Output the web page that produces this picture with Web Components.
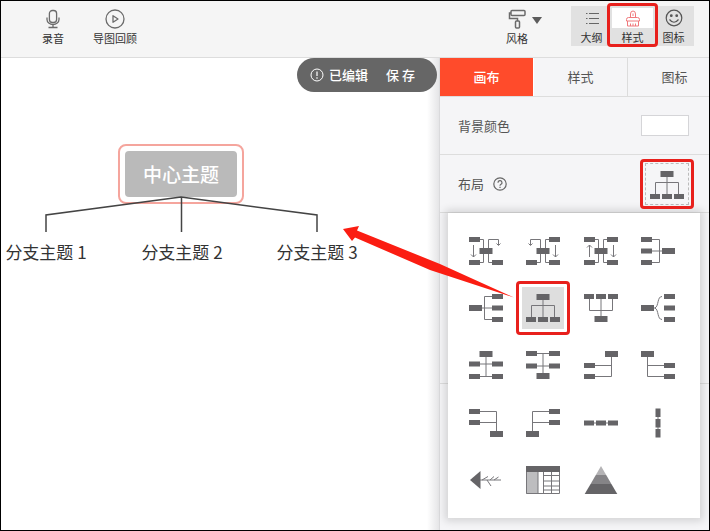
<!DOCTYPE html>
<html lang="zh-CN">
<head>
<meta charset="utf-8">
<title>思维导图</title>
<style>
body { margin: 0; font-family: "Noto Sans CJK SC", "Noto Sans", sans-serif; color: #444; }
</style>
</head>
<body>
<mind-app></mind-app>

<script>
const RESET = `
  * { box-sizing: border-box; }
  button { font: inherit; color: inherit; background: none; border: 0; padding: 0; margin: 0; cursor: pointer; }
  svg { display: block; }
`;

function define(name, html) {
  customElements.define(name, class extends HTMLElement {
    constructor() {
      super();
      this.attachShadow({ mode: 'open' });
    }
    connectedCallback() {
      this.shadowRoot.innerHTML = `<style>${RESET}</style>` + (typeof html === 'function' ? html(this) : html);
    }
  });
}

/* Layout glyphs, drawn around the origin in a 42 x 42 box */
const leaf = (x, y) => `<rect x="${x}" y="${y}" width="11" height="5"/>`;
const core = (x, y) => `<rect x="${x}" y="${y}" width="13" height="6"/>`;
const line = d => `<path d="${d}" fill="none" stroke="#77767a" stroke-width="1"/>`;
const flip = g => `<g transform="scale(-1 1)">${g}</g>`;
const down = x => line(`M${x} -6V6M${x - 2.5} 3.5L${x} 6L${x + 2.5} 3.5`);
const up = x => line(`M${x} 6V-6M${x - 2.5} -3.5L${x} -6L${x + 2.5} -3.5`);
const row3 = y => [-17, -5, 7].map(x => `<rect x="${x}" y="${y}" width="10" height="5"/>`).join('');
const clockwise = line('M-6 -11.5H-2.5V11.5H-6M6 11.5H2.5V-11.5H12.5V-6M10.5 -7.5L12.5 -5.5L14.5 -7.5')
  + down(-12.5) + leaf(-17, -14) + leaf(-17, 9) + leaf(6, 9) + core(-6.5, -3);
const rightTree = line('M-6 0H6M6 -11.5H-1.5V11.5H6') + core(-17, -3) + leaf(6, -14) + leaf(6, -2.5) + leaf(6, 9);
const dropLeft = line('M10.5 -10V11.5H-6M10.5 .5H-6') + core(4, -14) + leaf(-17, -2) + leaf(-17, 9);
const riseLeft = line('M10.5 10V-11.5H-6M10.5 -.5H-6') + core(4, 8) + leaf(-17, -14) + leaf(-17, -3);
const LAYOUTS = {
  clockwise: ['顺时针', clockwise],
  counter: ['逆时针', flip(clockwise)],
  balanced: ['平衡图', line('M-6 -11.5H-2.5V11.5H-6M6 -11.5H2.5V11.5H6') + up(-11.5) + down(12.5)
    + leaf(-17, -14) + leaf(-17, 9) + leaf(6, -14) + leaf(6, 9) + core(-6.5, -3)],
  left: ['向左', flip(rightTree)],
  right: ['向右', rightTree],
  org: ['组织结构图', line('M0 -8V9M-11.5 9V-2.5H11.5V9') + core(-6.5, -14) + row3(9)],
  orgUp: ['向上组织图', line('M0 8V-9M-11.5 -9V2.5H11.5V-9') + core(-6.5, 8) + row3(-14)],
  brace: ['括号图', line('M4 -11.5C-1 -11.5 1 -2 -3 0C1 2 -1 11.5 4 11.5M-4 0H-2') + core(-17, -3) + leaf(6, -14) + leaf(6, -2.5) + leaf(6, 9)],
  tree: ['树状图', line('M0 -8V11.5M-6 -1H6M-6 11.5H6') + core(-6.5, -14) + leaf(-17, -3.5) + leaf(6, -3.5) + leaf(-17, 9) + leaf(6, 9)],
  treeUp: ['向上树状图', line('M0 8V-11.5M-6 1H6M-6 -11.5H6') + core(-6.5, 8) + leaf(-17, -14) + leaf(6, -14) + leaf(-17, -1.5) + leaf(6, -1.5)],
  dropLeft: ['左下树', dropLeft],
  dropRight: ['右下树', flip(dropLeft)],
  riseLeft: ['左上树', riseLeft],
  riseRight: ['右上树', flip(riseLeft)],
  timeline: ['水平时间轴', line('M-16 0H16') + row3(-2.5)],
  vertical: ['垂直时间轴', line('M0 -14V14') + [-14.5, -4, 6].map(y => `<rect x="-2.5" y="${y}" width="5" height="8.5"/>`).join('')],
  fish: ['鱼骨图', '<path d="M-16 0L-5.5 -9V9Z"/>' + line('M-6 0H15M-4 0L2 -3.5M1 0L5 6M4 0L8 -3.5M8 0L12.500 -3')],
  table: ['表格', '<path d="M-17 -14H17V-8H-17Z"/><path d="M-17 -8H-5V14H-17Z" fill="#bdbdbf"/>'
    + line('M-16.5 -8V13.5H16.5V-8M-5 -8V14M.5 -8V14M8.5 -8V14M.5 -4.5H17M.5 1H17M.5 6H17M.5 10H17')],
  pyramid: ['金字塔', '<path d="M0 -14L5.2 -5H-5.2Z" fill="#b4b3b5"/><path d="M-5.2 -5H5.2L10.4 4H-10.4Z" fill="#858487"/><path d="M-10.4 4H10.4L16.3 14H-16.3Z"/>'],
};

define('layout-glyph', el => `
  <style>:host { display: block; width: 42px; height: 42px; }</style>
  <svg width="42" height="42" viewBox="-21 -21 42 42" fill="#656467" aria-hidden="true">${LAYOUTS[el.getAttribute('kind')][1]}</svg>`);

/* Red frame drawn around whatever is slotted in */
define('callout-frame', `
  <style>
    :host { display: block; position: relative; }
    i { position: absolute; inset: var(--frame, -6px); border: 3px solid #e8201c; border-radius: 4px; pointer-events: none; z-index: 2; }
  </style><slot></slot><i></i>`);

const ICONS = {
  mic: `<svg width="20" height="20" viewBox="0 0 20 20" fill="none" stroke="#6b6b6b" stroke-width="1.3"><rect x="6.4" y="1.5" width="7.2" height="12" rx="3"/><path d="M4 8.500v2a6 5 0 0 0 12 0v-2M10 15.5v3M5.500 18.5h9"/></svg>`,
  play: `<svg width="20" height="20" viewBox="0 0 20 20" fill="none" stroke="#6b6b6b" stroke-width="1.3"><circle cx="10" cy="10" r="9"/><path d="M8 6.7v6.600l5-3.300z" stroke-linejoin="round"/></svg>`,
  roller: `<svg width="20" height="20" viewBox="0 0 20 20" fill="none" stroke="#6b6b6b" stroke-width="1.5"><rect x="4" y="1.5" width="14" height="5" rx="1"/><path d="M4 4H2.500v5.500H10.500V12"/><rect x="8.500" y="12" width="4" height="7" rx="1"/></svg>`,
  list: `<svg width="20" height="20" viewBox="0 0 20 20" fill="none" stroke="#666"><path d="M7 5.500h10M7 10.500h10M7 15.500h10"/><path d="M4 5.500h1.500M4 10.500h1.500M4 15.500h1.500"/></svg>`,
  brush: `<svg width="20" height="20" viewBox="0 0 20 20" fill="none" stroke="#f0797c"><path d="M7.500 9.500V6a2.500 3 0 0 1 5 0v3.500M5.500 9.500h9q2 0 2 2v1.500h-13v-1.500q0-2 2-2zM4.500 13v5h11v-5M7.500 18v-2.500M10 18v-2.500M12.500 18v-2.500M10 5.500V8"/></svg>`,
  smile: `<svg width="20" height="20" viewBox="0 0 20 20" fill="none" stroke="#555" stroke-width="1.2"><circle cx="10" cy="10" r="7.800"/><path d="M5.500 11.500q4.500 5.500 9 0"/><circle cx="7.300" cy="7.700" r=".8" fill="#555"/><circle cx="12.700" cy="7.700" r=".8" fill="#555"/></svg>`,
};

define('tool-button', el => `
  <style>
    :host { display: block; }
    button { display: grid; grid-template-rows: 20px 16px; justify-items: center; width: 100%; font-size: 11px; line-height: 18px; white-space: nowrap; color: #333; }
    .icon { display: grid; justify-items: center; width: 100%; height: 20px; background: ${el.hasAttribute('active') ? '#fff' : 'none'}; }
  </style>
  <button type="button" aria-pressed="${el.hasAttribute('active')}"><span class="icon">${ICONS[el.getAttribute('icon')]}</span><span><slot></slot></span></button>`);

define('top-bar', `
  <style>
    :host { display: flex; align-items: flex-start; justify-content: space-between; height: 57px; background: #f5f5f5; border-bottom: 1px solid #ddd; }
    .left { display: flex; gap: 29px; padding: 8px 0 0 41px; }
    .right { display: flex; padding-right: 15px; }
    .style { display: flex; gap: 4px; padding: 8px 29px 0 0; }
    .style button { align-self: flex-start; padding-top: 8px; }
    .group { display: grid; grid-template-columns: repeat(3, 41px); align-items: start; margin-top: 5px; height: 40px; background: #e1e1e1; }
    .group > * { padding-top: 2px; }
    callout-frame { --frame: -3px -5px -1px -5px; height: 40px; }
  </style>
  <nav class="left" aria-label="工具">
    <tool-button icon="mic">录音</tool-button>
    <tool-button icon="play">导图回顾</tool-button>
  </nav>
  <div class="right">
    <div class="style">
      <tool-button icon="roller">风格</tool-button>
      <button type="button" aria-label="展开风格"><svg width="10" height="7" viewBox="0 0 10 7"><path d="M0 0h10L5 7z" fill="#5c5c5c"/></svg></button>
    </div>
    <div class="group">
      <tool-button icon="list">大纲</tool-button>
      <callout-frame><tool-button icon="brush" active>样式</tool-button></callout-frame>
      <tool-button icon="smile">图标</tool-button>
    </div>
  </div>`);

define('save-pill', `
  <style>
    :host { display: flex; align-items: center; height: 34px; padding: 0 22px 0 13px; border-radius: 17px; background: #666; color: #fff; font-size: 13px; line-height: 20px; font-weight: 500; white-space: nowrap; }
    .state { display: flex; align-items: center; gap: 5px; margin-right: 18px; }
  </style>
  <span class="state"><svg width="14" height="14" viewBox="0 0 14 14" fill="none" stroke="#fff"><circle cx="7" cy="7" r="6"/><path d="M7 3.5V8M7 9.3v1.4" stroke-width="1.2"/></svg><span>已编辑</span></span>
  <button type="button">保 存</button>`);

define('map-node', `
  <style>
    :host { position: absolute; transform: translate(-50%, -50%); white-space: nowrap; font-size: 17px; line-height: 24px; color: #333; }
    :host([root]) { padding: 5px; border: 2px solid #f5a59d; border-radius: 8px; color: #fff; font-size: 19px; line-height: 28px; font-weight: 500; }
    :host([root]) div { padding: 9px 18px; border-radius: 4px; background: #bababa; }
  </style><div><slot></slot></div>`);

define('map-canvas', `
  <style>
    :host { display: block; position: relative; min-width: 0; overflow: hidden; background: #fff; }
    svg { position: absolute; left: 0; top: 0; z-index: 1; }
    save-pill { position: absolute; right: 2px; top: 0; z-index: 3; }
    .shade { position: absolute; right: 0; top: 0; bottom: 0; width: 12px; background: linear-gradient(to right, #fff, #e5e5e7); }
  </style>
  <div class="shade"></div>
  <map-node root style="left:180px;top:116px">中心主题</map-node>
  <svg width="380" height="200" fill="none" stroke="#444" stroke-width="1.5" aria-hidden="true"><path d="M45 174V157L180 139L316 157V174M180.5 139V174"/></svg>
  <map-node style="left:45px;top:194px">分支主题 1</map-node>
  <map-node style="left:181px;top:194px">分支主题 2</map-node>
  <map-node style="left:316px;top:194px">分支主题 3</map-node>
  <save-pill></save-pill>`);

define('layout-picker', `
  <style>
    :host { display: grid; grid-template-columns: repeat(4, 1fr); grid-auto-rows: 1fr; place-items: center; padding: 9px 13px 9px 9px; background: #fff; box-shadow: 0 0 8px 3px rgba(0,0,0,.14); }
    button.on { background: #dedede; }
    callout-frame { height: 42px; }
  </style>
  ${Object.entries(LAYOUTS).map(([k, [label]]) => {
    const on = k === 'org';
    const b = `<button type="button" class="${on ? 'on' : ''}" aria-label="${label}" aria-pressed="${on}"><layout-glyph kind="${k}"></layout-glyph></button>`;
    return on ? `<callout-frame>${b}</callout-frame>` : b;
  }).join('')}`);

define('setting-row', `
  <style>
    :host { display: flex; align-items: center; justify-content: space-between; padding: 0 20px 0 18px; height: 58px; border-bottom: 1px solid #ddd; font-size: 13px; line-height: 20px; color: #555; }
    :host([tall]) { height: 171px; }
    .label { display: flex; align-items: center; gap: 9px; }
  </style><div class="label"><slot name="label"></slot></div><slot></slot>`);

define('style-panel', `
  <style>
    :host { display: block; position: relative; background: #f5f5f7; border-left: 1px solid #dadadc; }
    .tabs { display: flex; overflow: hidden; border-bottom: 1px solid #ddd; height: 39px; }
    .tabs button { flex: 0 0 94px; font-size: 13px; line-height: 20px; color: #555; border-right: 1px solid #dcdcdc; }
    .tabs .on { background: #ff4b2b; color: #fff; font-weight: 500; border-right-color: #fff; }
    .swatch { width: 48px; height: 21px; background: #fff; border: 1px solid #d5d5d8; }
    .current { display: grid; place-items: center; width: 44px; height: 42px; border: 1px dashed #bbb; }
    callout-frame { --frame: -4px -5px; }
    layout-picker { position: absolute; inset: 155px 9px 12px 8px; }
  </style>
  <div class="tabs" role="tablist">
    <button type="button" role="tab" class="on" aria-selected="true">画布</button>
    <button type="button" role="tab" aria-selected="false">样式</button>
    <button type="button" role="tab" aria-selected="false">图标</button>
  </div>
  <setting-row><span slot="label">背景颜色</span><button type="button" class="swatch" aria-label="背景颜色"></button></setting-row>
  <setting-row>
    <span slot="label">布局</span>
    <svg slot="label" width="14" height="14" viewBox="0 0 14 14" fill="none" stroke="#666" stroke-width="1.2"><circle cx="7" cy="7" r="6.2"/><path d="M5 5.7a2 2 0 1 1 2.7 1.8Q7 7.8 7 8.7M7 9.7v1.2"/></svg>
    <callout-frame><button type="button" class="current" aria-label="当前布局"><layout-glyph kind="org"></layout-glyph></button></callout-frame>
  </setting-row>
  <setting-row tall></setting-row>
  <layout-picker></layout-picker>`);

define('mind-app', `
  <style>
    :host { display: grid; grid-template-rows: auto 1fr; position: relative; min-height: 100vh; box-sizing: border-box; border: 1px solid #000; overflow: hidden; }
    main { display: grid; grid-template-columns: minmax(0, 1fr) 270px; }
    .arrow { position: absolute; right: 190px; top: 220px; z-index: 5; pointer-events: none; }
  </style>
  <top-bar></top-bar>
  <main><map-canvas></map-canvas><style-panel></style-panel></main>
  <svg class="arrow" width="180" height="80" viewBox="339 221 180 80" fill="#fb1d12" aria-hidden="true"><path d="M343 229L359 226L357 230.5L440 264L514 297.5L430 270L355 237.5L352 241Z"/></svg>`);
</script>
</body>
</html>
